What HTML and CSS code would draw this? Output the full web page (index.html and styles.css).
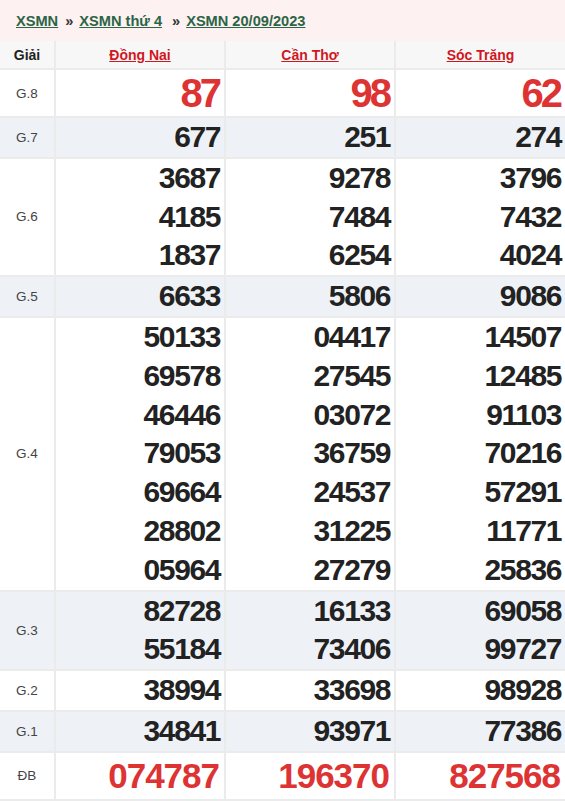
FILE: index.html
```html
<!DOCTYPE html>
<html lang="vi">
<head>
<meta charset="utf-8">
<link rel="stylesheet" href="styles.css">
</head>
<body>
<div class="crumbs">
  <a href="#">XSMN</a><span class="sep">»</span><a href="#">XSMN thứ 4</a><span class="sep sep2">»</span><a href="#">XSMN 20/09/2023</a>
</div>
<table class="kq">
  <colgroup><col class="c0"><col class="c1"><col class="c1"><col class="c1"></colgroup>
  <thead>
    <tr><th class="lbl-h">Giải</th><th><a href="#">Đồng Nai</a></th><th><a href="#">Cần Thơ</a></th><th><a href="#">Sóc Trăng</a></th></tr>
  </thead>
  <tbody>
    <tr class="big"><td class="lbl">G.8</td><td><div class="n red g8">87</div></td><td><div class="n red g8">98</div></td><td><div class="n red g8">62</div></td></tr>
    <tr class="alt"><td class="lbl">G.7</td><td><div class="n">677</div></td><td><div class="n">251</div></td><td><div class="n">274</div></td></tr>
    <tr><td class="lbl">G.6</td>
      <td><div class="n">3687</div><div class="n">4185</div><div class="n">1837</div></td>
      <td><div class="n">9278</div><div class="n">7484</div><div class="n">6254</div></td>
      <td><div class="n">3796</div><div class="n">7432</div><div class="n">4024</div></td></tr>
    <tr class="alt"><td class="lbl">G.5</td><td><div class="n">6633</div></td><td><div class="n">5806</div></td><td><div class="n">9086</div></td></tr>
    <tr><td class="lbl">G.4</td>
      <td><div class="n">50133</div><div class="n">69578</div><div class="n">46446</div><div class="n">79053</div><div class="n">69664</div><div class="n">28802</div><div class="n">05964</div></td>
      <td><div class="n">04417</div><div class="n">27545</div><div class="n">03072</div><div class="n">36759</div><div class="n">24537</div><div class="n">31225</div><div class="n">27279</div></td>
      <td><div class="n">14507</div><div class="n">12485</div><div class="n">91103</div><div class="n">70216</div><div class="n">57291</div><div class="n">11771</div><div class="n">25836</div></td></tr>
    <tr class="alt"><td class="lbl">G.3</td>
      <td><div class="n">82728</div><div class="n">55184</div></td>
      <td><div class="n">16133</div><div class="n">73406</div></td>
      <td><div class="n">69058</div><div class="n">99727</div></td></tr>
    <tr><td class="lbl">G.2</td><td><div class="n">38994</div></td><td><div class="n">33698</div></td><td><div class="n">98928</div></td></tr>
    <tr class="alt"><td class="lbl">G.1</td><td><div class="n">34841</div></td><td><div class="n">93971</div></td><td><div class="n">77386</div></td></tr>
    <tr class="big"><td class="lbl">ĐB</td><td><div class="n red db">074787</div></td><td><div class="n red db">196370</div></td><td><div class="n red db">827568</div></td></tr>
  </tbody>
</table>
</body>
</html>
```
FILE: styles.css
```css
html, body {
  margin: 0;
  padding: 0;
  background: #fff;
  font-family: "Liberation Sans", Arial, sans-serif;
  color: #222;
}
.crumbs {
  background: #fdf1f1;
  height: 41px;
  box-sizing: border-box;
  padding: 11px 0 0 16px;
  font-size: 14.6px;
  font-weight: bold;
  line-height: 20px;
  color: #333;
}
.crumbs a {
  color: #2c6446;
  text-decoration: underline;
}
.crumbs .sep {
  margin: 0 6px 0 7px;
}
.crumbs .sep2 {
  margin-left: 10px;
}
.kq {
  width: 565px;
  border-collapse: collapse;
  table-layout: fixed;
  margin: 0;
}
.kq col.c0 { width: 55px; }
.kq th, .kq td {
  border: 2px solid #ebebeb;
  padding: 0;
}
.kq tr:first-child th { border-top: none; }
.kq th:first-child, .kq td:first-child { border-left: none; }
.kq th:last-child, .kq td:last-child { border-right: none; }
.kq thead tr {
  background: #f7f7f7;
}
.kq th {
  height: 27px;
  font-size: 14px;
  font-weight: bold;
  text-align: center;
  vertical-align: middle;
}
.kq th a {
  color: #d0171f;
  text-decoration: underline;
}
.kq th.lbl-h {
  color: #222;
  font-size: 14px;
}
.kq tr.alt {
  background: #eef2f7;
}
.kq td.lbl {
  text-align: center;
  vertical-align: middle;
  font-size: 13.5px;
  color: #444;
}
.kq td {
  text-align: right;
  vertical-align: middle;
}
.n {
  font-size: 30px;
  font-weight: bold;
  letter-spacing: -1.4px;
  line-height: 38.8px;
  height: 38.8px;
  padding-right: 4px;
  color: #222;
}
.n.red { color: #dd3333; }
.big td { height: 46px; }
.n.g8 {
  font-size: 40px;
  letter-spacing: -3px;
  line-height: 46px;
  height: 46px;
  padding-right: 5px;
}
.n.db {
  font-size: 35px;
  letter-spacing: -1px;
  line-height: 46px;
  height: 46px;
  padding-right: 5px;
}
```
